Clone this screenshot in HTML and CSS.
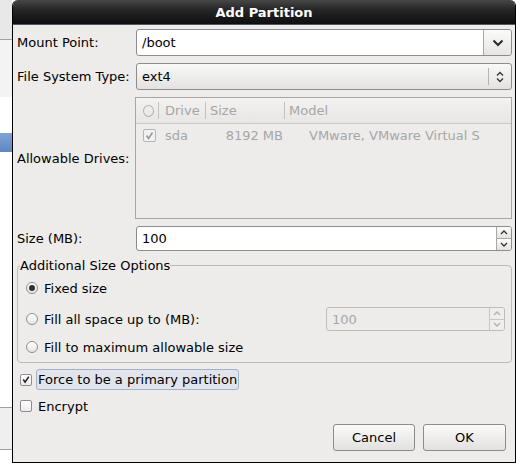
FILE: index.html
```html
<!DOCTYPE html>
<html>
<head>
<meta charset="utf-8">
<link rel="stylesheet" href="styles.css">
</head>
<body>
<div class="app-strip">
  <div class="seg seg-top"></div>
  <div class="seg seg-line"></div>
  <div class="seg seg-light"></div>
  <div class="seg seg-white1"></div>
  <div class="seg seg-sel"></div>
  <div class="seg seg-white2"></div>
  <div class="seg seg-line"></div>
  <div class="seg seg-light2"></div>
  <div class="seg seg-line"></div>
  <div class="seg seg-white3"></div>
</div>
<div class="dialog">
  <div class="titlebar">Add Partition</div>
  <div class="content">
    <div class="row row-mount">
      <div class="label">Mount Point:</div>
      <div class="combo-entry">
        <div class="entry-text">/boot</div>
        <div class="combo-btn">
          <svg width="12" height="8" viewBox="0 0 12 8"><path d="M1.5 1.5 L6 6 L10.5 1.5" stroke="#2a2a2a" stroke-width="2" fill="none"/></svg>
        </div>
      </div>
    </div>
    <div class="row row-fs">
      <div class="label">File System Type:</div>
      <div class="combo">
        <div class="combo-text">ext4</div>
        <div class="combo-sep"></div>
        <div class="combo-arrows">
          <svg width="8" height="14" viewBox="0 0 8 14"><path d="M1 5.5 L4 2.5 L7 5.5 M1 8.5 L4 11.5 L7 8.5" stroke="#333" stroke-width="1.3" fill="none"/></svg>
        </div>
      </div>
    </div>
    <div class="row row-drives">
      <div class="label">Allowable Drives:</div>
      <div class="tree">
        <div class="tree-head">
          <div class="col col-toggle"><span class="head-circle"></span></div>
          <div class="col col-drive">Drive</div>
          <div class="col col-size">Size</div>
          <div class="col col-model">Model</div>
        </div>
        <div class="tree-row">
          <div class="col col-toggle"><span class="cb cb-dis"><svg width="11" height="11" viewBox="0 0 11 11"><path d="M2.5 5.5 L4.5 8.5 L8.5 2.5" stroke="#9a9a9a" stroke-width="1.6" fill="none"/></svg></span></div>
          <div class="col col-drive">sda</div>
          <div class="col col-size cell-size">8192 MB</div>
          <div class="col col-model cell-model">VMware, VMware Virtual S</div>
        </div>
      </div>
    </div>
    <div class="row row-size">
      <div class="label">Size (MB):</div>
      <div class="spin">
        <div class="entry-text">100</div>
        <div class="spin-btns">
          <div class="spin-btn"><svg width="8" height="5" viewBox="0 0 8 5"><path d="M1 4 L4 1 L7 4" stroke="#333" stroke-width="1.3" fill="none"/></svg></div>
          <div class="spin-btn"><svg width="8" height="5" viewBox="0 0 8 5"><path d="M1 1 L4 4 L7 1" stroke="#333" stroke-width="1.3" fill="none"/></svg></div>
        </div>
      </div>
    </div>
    <fieldset class="frame">
      <legend class="frame-label">Additional Size Options</legend>
      <div class="frame-body">
        <div class="opt opt-1">
          <span class="radio radio-on"><span class="dot"></span></span>
          <span class="opt-text">Fixed size</span>
        </div>
        <div class="opt opt-2">
          <span class="radio"></span>
          <span class="opt-text">Fill all space up to (MB):</span>
          <div class="spin spin-dis">
            <div class="entry-text">100</div>
            <div class="spin-btns">
              <div class="spin-btn"><svg width="8" height="5" viewBox="0 0 8 5"><path d="M1 4 L4 1 L7 4" stroke="#b0b0b0" stroke-width="1.3" fill="none"/></svg></div>
              <div class="spin-btn"><svg width="8" height="5" viewBox="0 0 8 5"><path d="M1 1 L4 4 L7 1" stroke="#b0b0b0" stroke-width="1.3" fill="none"/></svg></div>
            </div>
          </div>
        </div>
        <div class="opt opt-3">
          <span class="radio"></span>
          <span class="opt-text">Fill to maximum allowable size</span>
        </div>
      </div>
    </fieldset>
    <div class="check-row check-force">
      <span class="cb"><svg width="11" height="11" viewBox="0 0 11 11"><path d="M2.5 5.5 L4.5 8.5 L8.5 2.5" stroke="#222" stroke-width="1.6" fill="none"/></svg></span>
      <span class="focus-label">Force to be a primary partition</span>
    </div>
    <div class="check-row check-encrypt">
      <span class="cb"></span>
      <span class="plain-label">Encrypt</span>
    </div>
    <div class="buttons">
      <div class="btn btn-cancel">Cancel</div>
      <div class="btn btn-ok">OK</div>
    </div>
  </div>
</div>
</body>
</html>
```
FILE: styles.css
```css
* { box-sizing: border-box; }
html, body { margin: 0; padding: 0; }
body {
  width: 516px;
  height: 465px;
  overflow: hidden;
  display: flex;
  background: #ffffff;
  font-family: "DejaVu Sans", sans-serif;
  font-size: 13px;
  color: #000;
}
.app-strip {
  width: 12px;
  display: flex;
  flex-direction: column;
  flex: none;
}
.seg { width: 100%; flex: none; }
.seg-top { height: 39px; background: #e8e8e8; }
.seg-line { height: 1px; background: #a2a2a2; }
.seg-light { height: 57px; background: #f3f3f3; }
.seg-white1 { height: 36px; background: #fff; }
.seg-sel { height: 19px; background: linear-gradient(#7fa4d6, #5e86c0); }
.seg-white2 { height: 255px; background: #fff; }
.seg-light2 { height: 41px; background: #efefef; }
.seg-white3 { flex: 1; background: #fff; }

.dialog {
  width: 504px;
  height: 463px;
  flex: none;
  display: flex;
  flex-direction: column;
  border: 1px solid #000;
  border-top: none;
  border-radius: 6px 6px 0 0;
  background: #edeceb;
  overflow: hidden;
}
.titlebar {
  height: 25px;
  flex: none;
  background: linear-gradient(#474747, #262626 40%, #0e0e0e);
  border-bottom: 1px solid #505868;
  color: #fff;
  font-weight: bold;
  text-align: center;
  line-height: 25px;
  font-size: 13px;
}
.content {
  flex: 1;
  padding: 4px 3px 0 4px;
  display: flex;
  flex-direction: column;
}
.row {
  display: grid;
  grid-template-columns: 119px 1fr;
  align-items: center;
}
.label { white-space: nowrap; }
.row-mount { height: 27px; }
.row-fs { height: 27px; margin-top: 7px; }
.row-drives { height: 122px; margin-top: 7px; }
.row-size { height: 25px; margin-top: 7px; }

.combo-entry {
  height: 27px;
  display: flex;
  border: 1px solid #8c8c8c;
  border-radius: 3px;
  background: #fff;
  overflow: hidden;
}
.entry-text {
  flex: 1;
  padding-left: 5px;
  display: flex;
  align-items: center;
}
.combo-btn {
  width: 28px;
  border-left: 1px solid #a8a8a8;
  background: linear-gradient(#fbfbfa, #e6e5e4);
  display: flex;
  align-items: center;
  justify-content: center;
}
.combo {
  height: 27px;
  display: flex;
  align-items: center;
  border: 1px solid #8c8c8c;
  border-radius: 3px;
  background: linear-gradient(#f9f9f8, #e3e2e1);
}
.combo-text { flex: 1; padding-left: 5px; }
.combo-sep { width: 1px; height: 17px; background: #b4b4b4; }
.combo-arrows {
  width: 22px;
  display: flex;
  align-items: center;
  justify-content: center;
}

.tree {
  height: 122px;
  margin-left: -1px;
  border: 1px solid #a6a6a6;
  background: #edeceb;
  color: #a6a6a6;
  display: flex;
  flex-direction: column;
}
.tree-head {
  height: 26px;
  display: flex;
  align-items: center;
  background: linear-gradient(#f3f2f1, #e7e6e5);
  border-bottom: 1px solid #c9c8c7;
}
.tree-row {
  height: 22px;
  display: flex;
  align-items: center;
}
.col { display: flex; align-items: center; height: 100%; white-space: nowrap; overflow: hidden; }
.col-toggle { width: 22px; padding-left: 7px; }
.col-drive { width: 47px; padding-left: 7px; }
.col-size { width: 79px; padding-left: 5px; }
.col-model { flex: 1; padding-left: 5px; }
.tree-head .col-drive, .tree-head .col-size, .tree-head .col-model { position: relative; }
.tree-head .col-drive::before, .tree-head .col-size::before, .tree-head .col-model::before {
  content: "";
  position: absolute;
  left: 0;
  top: 4px;
  height: 17px;
  width: 1px;
  background: #c2c1c0;
}
.head-circle {
  width: 11px;
  height: 12px;
  border: 1px solid #b0b0b0;
  border-radius: 50%;
  display: inline-block;
}
.cell-size { justify-content: flex-end; padding-right: 1px; }
.cell-model { padding-left: 25px; }

.spin {
  height: 25px;
  display: flex;
  border: 1px solid #8c8c8c;
  border-radius: 3px;
  background: #fff;
  overflow: hidden;
}
.spin-btns {
  width: 15px;
  display: flex;
  flex-direction: column;
  border-left: 1px solid #a8a8a8;
}
.spin-btn {
  flex: 1;
  display: flex;
  align-items: center;
  justify-content: center;
  background: linear-gradient(#fbfbfa, #e4e3e2);
}
.spin-btn + .spin-btn { border-top: 1px solid #a8a8a8; }
.spin-dis {
  height: 24px;
  width: 179px;
  margin-left: auto;
  margin-right: 6px;
  background: #edeceb;
  border-color: #bdbcbb;
  color: #a8a8a8;
}
.spin-dis .spin-btns { border-left-color: #c8c7c6; }
.spin-dis .spin-btn { background: #efeeed; }
.spin-dis .spin-btn + .spin-btn { border-top-color: #c8c7c6; }

.frame {
  margin: 7px 0 0 0;
  padding: 0 0 0 2px;
  border: 1px solid #bcbbba;
  border-radius: 4px;
  min-width: 0;
}
.frame-label {
  padding: 0;
  line-height: 15px;
}
.frame-body {
  margin-left: -2px;
  padding: 5px 0 5px 8px;
  display: flex;
  flex-direction: column;
}
.opt { display: flex; align-items: center; }
.opt-1 { height: 20px; }
.opt-2 { height: 24px; margin-top: 9px; }
.opt-3 { height: 20px; margin-top: 6px; }
.radio {
  width: 12px;
  height: 12px;
  border: 1px solid #8e8e8e;
  border-radius: 50%;
  background: linear-gradient(#ffffff, #e6e6e6);
  display: flex;
  align-items: center;
  justify-content: center;
  flex: none;
}
.dot { width: 6px; height: 6px; border-radius: 50%; background: #303030; }
.opt-text { margin-left: 6px; white-space: nowrap; }

.check-row {
  display: flex;
  align-items: center;
  padding-left: 3px;
}
.check-force { height: 21px; margin-top: 6px; }
.check-encrypt { height: 20px; margin-top: 6px; }
.cb {
  width: 12px;
  height: 12px;
  border: 1px solid #8e8e8e;
  border-radius: 2px;
  background: linear-gradient(#ffffff, #ececec);
  display: flex;
  align-items: center;
  justify-content: center;
  flex: none;
}
.cb-dis { border-color: #b5b5b5; width: 13px; height: 13px; background: #f2f2f2; }
.focus-label {
  margin-left: 4px;
  height: 21px;
  padding: 0 1px;
  border: 1px solid #a3b2c9;
  border-radius: 3px;
  background: #e1e5eb;
  display: flex;
  align-items: center;
  white-space: nowrap;
}
.plain-label { margin-left: 6px; }

.buttons {
  display: flex;
  justify-content: flex-end;
  gap: 8px;
  margin-top: 8px;
  padding-right: 6px;
}
.btn {
  height: 27px;
  border: 1px solid #8c8c8c;
  border-radius: 3px;
  background: linear-gradient(#fafaf9, #e2e1e0);
  display: flex;
  align-items: center;
  justify-content: center;
}
.btn-cancel { width: 82px; }
.btn-ok { width: 83px; }
```
